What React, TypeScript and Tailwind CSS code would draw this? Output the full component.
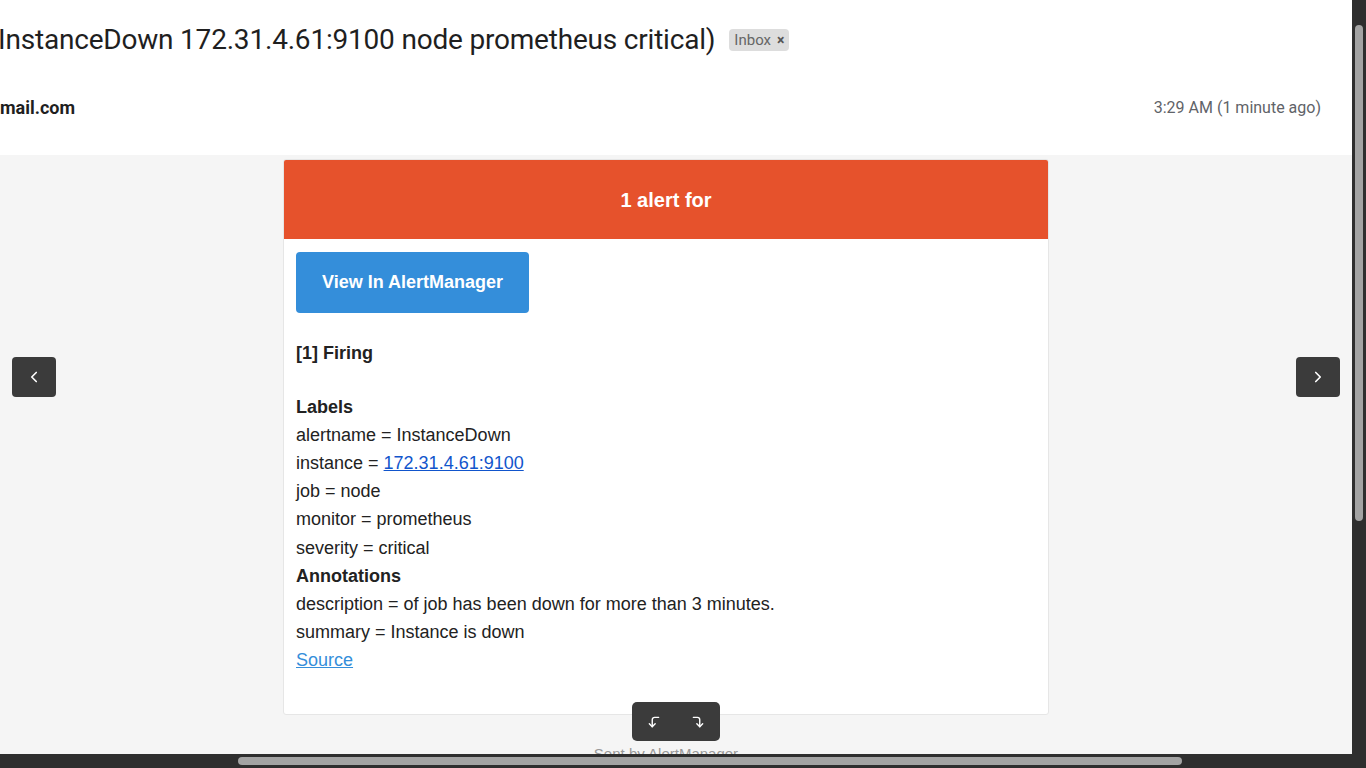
import React from 'react';
import { ChevronLeft, ChevronRight, CornerLeftDown, CornerRightDown } from 'lucide-react';

const labels: [string, string, boolean?][] = [
  ['alertname', 'InstanceDown'],
  ['instance', '172.31.4.61:9100', true],
  ['job', 'node'],
  ['monitor', 'prometheus'],
  ['severity', 'critical'],
];

const App: React.FC = () => {
  return (
    <div className="flex h-screen w-screen overflow-hidden bg-[#2e2e2e]">
      <div className="flex flex-1 flex-col">
        <div className="relative flex-1 overflow-hidden bg-[#f5f5f5]">
          {/* message header */}
          <div className="h-[155px] bg-white">
            <div className="flex items-center pt-[23px] -ml-[2px]">
              <h1 className="text-[28px] leading-[34px] text-[#1f1f1f] whitespace-nowrap font-['Roboto',sans-serif] tracking-[-0.2px]">
                InstanceDown 172.31.4.61:9100 node prometheus critical)
              </h1>
              <span className="ml-[14px] flex h-[22px] items-center gap-[6px] rounded-[4px] bg-[#dddddd] px-[5px] text-[15px] text-[#666] font-['Roboto',sans-serif]">
                Inbox <span className="text-[14px] font-bold text-[#555]">×</span>
              </span>
            </div>
            <div className="mt-[37px] flex items-center justify-between pr-[31px]">
              <span className="text-[18px] font-bold text-[#1f1f1f] font-['Roboto',sans-serif]">mail.com</span>
              <span className="text-[16px] text-[#5f6368] font-['Roboto',sans-serif]">3:29 AM (1 minute ago)</span>
            </div>
          </div>

          {/* email body */}
          <div className="pt-[4px] font-['Liberation_Sans',Arial,sans-serif] text-[#222]">
            <div className="ml-[283px] w-[766px] overflow-hidden rounded-[3px] border border-[#e6e6e6] bg-white">
              <div className="flex h-[79px] items-center justify-center bg-[#e6522c] text-[20px] font-bold text-white">
                1 alert for
              </div>
              <div className="px-[12px] pt-[13px] pb-[40px] text-[18px] leading-[28.1px]">
                <div className="flex h-[61px] w-[233px] items-center justify-center rounded-[4px] bg-[#348eda] text-[18px] font-bold text-white">
                  View In AlertManager
                </div>
                <div className="mt-[26px] font-bold">[1] Firing</div>
                <div className="mt-[26px] font-bold">Labels</div>
                {labels.map(([k, v, link]) => (
                  <div key={k}>
                    {k} ={' '}
                    {link ? <span className="text-[#1155cc] underline">{v}</span> : v}
                  </div>
                ))}
                <div className="font-bold">Annotations</div>
                <div>description = of job has been down for more than 3 minutes.</div>
                <div>summary = Instance is down</div>
                <div className="text-[#348eda] underline">Source</div>
              </div>
            </div>
            <div className="ml-[283px] w-[766px] pt-[28px] text-center text-[15px] text-[#999]">Sent by AlertManager</div>
          </div>

          {/* overlay controls */}
          <div className="absolute left-[12px] top-[357px] flex h-[40px] w-[44px] items-center justify-center rounded-[4px] bg-[#3b3b3b] text-white">
            <ChevronLeft size={18} strokeWidth={2.2} />
          </div>
          <div className="absolute left-[1296px] top-[357px] flex h-[40px] w-[44px] items-center justify-center rounded-[4px] bg-[#3b3b3b] text-white">
            <ChevronRight size={18} strokeWidth={2.2} />
          </div>
          <div className="absolute left-[632px] top-[702px] flex h-[39px] w-[88px] items-center justify-center gap-[30px] rounded-[5px] bg-[#3b3b3b] text-white">
            <CornerLeftDown size={14} strokeWidth={2.4} />
            <CornerRightDown size={14} strokeWidth={2.4} />
          </div>
        </div>
        {/* horizontal scrollbar */}
        <div className="flex h-[14px] items-center bg-[#2e2e2e]">
          <div className="ml-[238px] h-[8px] w-[944px] rounded-full bg-[#a3a3a3]" />
        </div>
      </div>
      {/* vertical scrollbar */}
      <div className="w-[14px] bg-[#2e2e2e] pt-[25px]">
        <div className="mx-auto h-[496px] w-[8px] rounded-full bg-[#a3a3a3]" />
      </div>
    </div>
  );
};

export default App;
